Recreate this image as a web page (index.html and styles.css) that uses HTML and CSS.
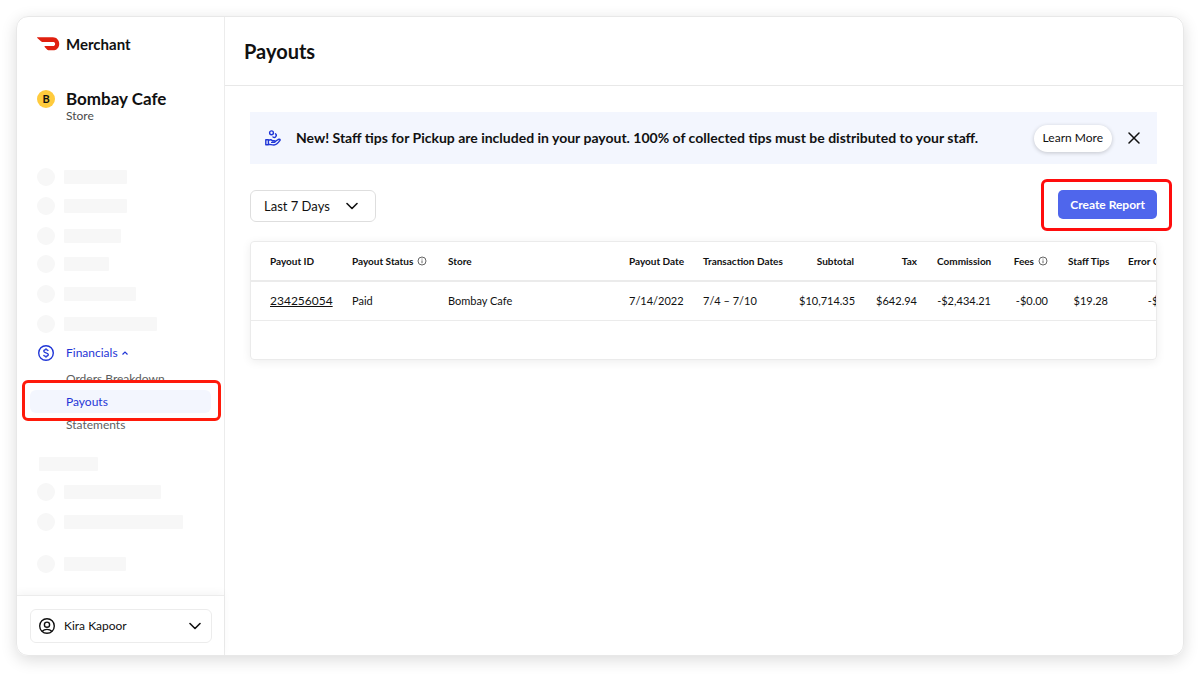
FILE: index.html
```html
<!DOCTYPE html>
<html lang="en">
<head>
<meta charset="utf-8">
<title>Payouts - Merchant</title>
<link rel="stylesheet" href="styles.css">
</head>
<body>
<div class="window">
  <aside class="sidebar">
    <div class="brand">
      <svg class="brand-logo" viewBox="0 0 24 14" aria-hidden="true"><path fill="#e0200f" d="M0.6 0H16.6C20.4 0 23.2 3 23.2 6.9S20.4 13.6 16.6 13.6H11.8C11.3 13.6 11 13.4 10.7 13.1L8 10.2C7.6 9.7 7.8 9.2 8.4 9.2H16.6C18 9.2 18.9 8.2 18.9 6.8S18 4.8 16.6 4.8H5.6C5.1 4.8 4.7 4.6 4.4 4.3L0.3 0.8C-0.1 0.4 0.1 0 0.6 0Z"/></svg>
      <span class="brand-name">Merchant</span>
    </div>
    <div class="store">
      <span class="store-badge">B</span>
      <div>
        <div class="store-name">Bombay Cafe</div>
        <div class="store-type">Store</div>
      </div>
    </div>
    <div class="skeleton-group skeleton-main" aria-hidden="true">
      <div class="skeleton"><i class="dot"></i><i class="bar" style="width:63px"></i></div>
      <div class="skeleton"><i class="dot"></i><i class="bar" style="width:63px"></i></div>
      <div class="skeleton"><i class="dot"></i><i class="bar" style="width:57px"></i></div>
      <div class="skeleton"><i class="dot"></i><i class="bar" style="width:45px"></i></div>
      <div class="skeleton"><i class="dot"></i><i class="bar" style="width:72px"></i></div>
      <div class="skeleton"><i class="dot"></i><i class="bar" style="width:93px"></i></div>
    </div>
    <nav class="nav">
      <button class="nav-parent" type="button" aria-expanded="true">
        <svg class="nav-icon" viewBox="0 0 16 16" fill="none" stroke="currentColor" aria-hidden="true"><circle cx="8" cy="8" r="7.3" stroke-width="1.4"/><path stroke-width="1.3" d="M10.2 6C10 5.1 9.2 4.7 8 4.7S5.8 5.3 5.8 6.3C5.8 8.4 10.3 7.3 10.3 9.6C10.3 10.7 9.3 11.3 8 11.3S5.8 10.8 5.6 9.8M8 3.2V4.8M8 11.2V12.8"/></svg>
        <span>Financials</span>
        <svg class="nav-caret" viewBox="0 0 6 4" fill="none" stroke="currentColor" stroke-width="1.2" aria-hidden="true"><path d="M0.5 3.5L3 1L5.5 3.5"/></svg>
      </button>
      <ul class="subnav">
        <li><a class="subnav-link" href="#">Orders Breakdown</a></li>
        <li class="current"><a class="subnav-link" href="#" aria-current="page">Payouts</a></li>
        <li><a class="subnav-link" href="#">Statements</a></li>
      </ul>
    </nav>
    <div class="skeleton-group skeleton-extra" aria-hidden="true">
      <div class="skeleton skeleton-title"><i class="bar" style="width:59px"></i></div>
      <div class="skeleton"><i class="dot"></i><i class="bar" style="width:97px"></i></div>
      <div class="skeleton"><i class="dot"></i><i class="bar" style="width:119px"></i></div>
      <div class="skeleton"><i class="dot"></i><i class="bar" style="width:62px"></i></div>
    </div>
    <div class="account">
      <button class="account-button" type="button">
        <svg class="account-icon" viewBox="0 0 16 16" fill="none" stroke="currentColor" stroke-width="1.4" aria-hidden="true"><circle cx="8" cy="8" r="7.3"/><circle cx="8" cy="6.7" r="2.6"/><path d="M3.2 13.3C4.6 11.9 6.2 11.4 8 11.4S11.4 11.9 12.8 13.3"/></svg>
        <span>Kira Kapoor</span>
        <svg class="chevron" viewBox="0 0 12 8" aria-hidden="true"><path d="M1 1.5L6 6.5L11 1.5"/></svg>
      </button>
    </div>
  </aside>
  <main class="main">
    <header class="page-header"><h1>Payouts</h1></header>
    <div class="content">
      <section class="banner">
        <svg class="banner-icon" viewBox="0 0 16 16" fill="none" stroke="currentColor" stroke-width="1.4" stroke-linejoin="round" stroke-linecap="round" aria-hidden="true"><circle cx="6.5" cy="2.8" r="1.9"/><path d="M10.4 3.8A2 2 0 0 1 8 7"/><path d="M0.8 9.8H3.4V14.8H0.8ZM3.6 10.3C5.4 9.4 6.6 9.9 7.4 10.7H9.4C10.3 10.7 10.3 12.4 9.4 12.4H6.6M10.3 11.4L13.2 9.5C14.6 8.8 15.6 9.6 14.8 10.7C13.2 12.9 11.6 15 9 15C6.6 15 5.4 14.3 3.6 14.3"/></svg>
        <p class="banner-text">New! Staff tips for Pickup are included in your payout. 100% of collected tips must be distributed to your staff.</p>
        <button class="learn-more" type="button">Learn More</button>
        <button class="close" type="button" aria-label="Dismiss"><svg viewBox="0 0 12 12" fill="none" stroke="currentColor" stroke-width="1.5" stroke-linecap="round" aria-hidden="true"><path d="M1 1L11 11M11 1L1 11"/></svg></button>
      </section>
      <div class="toolbar">
        <div class="range">
          <select class="range-select" aria-label="Date range"><option>Last 7 Days</option></select>
          <svg class="chevron range-chevron" viewBox="0 0 12 8" aria-hidden="true"><path d="M1 1.5L6 6.5L11 1.5"/></svg>
        </div>
        <div class="create">
          <button class="create-report" type="button">Create Report</button>
        </div>
      </div>
      <div class="table-card">
        <table class="payouts">
          <colgroup>
            <col class="col-id"><col class="col-status"><col><col class="col-date"><col class="col-transactions"><col class="col-subtotal"><col class="col-tax"><col class="col-commission"><col class="col-fees"><col class="col-tips"><col class="col-error">
          </colgroup>
          <thead>
            <tr>
              <th>Payout ID</th>
              <th><span class="with-info">Payout Status <svg class="info" viewBox="0 0 10 10" aria-hidden="true"><circle cx="5" cy="5" r="4"/><path d="M5 4.4V7.2M5 2.6V3.5"/></svg></span></th>
              <th>Store</th>
              <th>Payout Date</th>
              <th>Transaction Dates</th>
              <th class="num">Subtotal</th>
              <th class="num">Tax</th>
              <th class="num">Commission</th>
              <th class="num"><span class="with-info">Fees <svg class="info" viewBox="0 0 10 10" aria-hidden="true"><circle cx="5" cy="5" r="4"/><path d="M5 4.4V7.2M5 2.6V3.5"/></svg></span></th>
              <th class="num">Staff Tips</th>
              <th>Error Charges</th>
            </tr>
          </thead>
          <tbody>
            <tr>
              <td><a class="payout-link" href="#">234256054</a></td>
              <td>Paid</td>
              <td>Bombay Cafe</td>
              <td>7/14/2022</td>
              <td>7/4 – 7/10</td>
              <td class="num">$10,714.35</td>
              <td class="num">$642.94</td>
              <td class="num">-$2,434.21</td>
              <td class="num">-$0.00</td>
              <td class="num">$19.28</td>
              <td class="num">-$0.00</td>
            </tr>
          </tbody>
        </table>
      </div>
    </div>
  </main>
</div>
</body>
</html>
```
FILE: styles.css
```css
* { box-sizing: border-box; }
body {
  margin: 0;
  padding: 16px 16px 30px;
  min-height: 100vh;
  display: flex;
  background: #fff;
  color: #111;
  font-family: Lato, "Open Sans", sans-serif;
  font-size: 12px;
  line-height: 16px;
}
button, select { font: inherit; color: inherit; cursor: pointer; }
h1, p, ul { margin: 0; padding: 0; }
a { color: inherit; text-decoration: none; }

.window {
  flex: 1;
  display: flex;
  border: 1px solid #e8e8e8;
  border-radius: 12px;
  box-shadow: 0 4px 16px rgba(0, 0, 0, 0.14);
  overflow: hidden;
}

.sidebar {
  width: 208px;
  flex: none;
  display: flex;
  flex-direction: column;
  border-right: 1px solid #ececec;
}
.brand {
  display: flex;
  align-items: center;
  gap: 6px;
  padding: 17px 20px 0;
}
.brand-logo { width: 23px; height: 14px; }
.brand-name { font-size: 15px; line-height: 20px; font-weight: 700; }

.store {
  display: flex;
  align-items: flex-start;
  gap: 11px;
  padding: 35px 20px 0;
}
.store-badge {
  width: 18px;
  height: 18px;
  margin-top: 1px;
  border-radius: 50%;
  background: #ffcb3d;
  font-size: 11px;
  line-height: 18px;
  font-weight: 700;
  text-align: center;
}
.store-name { font-size: 17px; line-height: 20px; font-weight: 700; }
.store-type { color: #4a4a4a; line-height: 14px; }

.skeleton-group { display: grid; padding-left: 20px; }
.skeleton-main { margin-top: 45px; grid-template-rows: 29px 30px 28px 30px 30px 18px; }
.skeleton-extra { margin-top: 21px; grid-template-rows: 26px 30px 42px 18px; }
.skeleton { display: flex; align-items: center; gap: 9px; height: 18px; }
.skeleton-title { padding-left: 2px; height: 14px; }
.dot { width: 18px; height: 18px; border-radius: 50%; background: #f7f7f7; }
.bar { height: 14px; border-radius: 1px; background: #f7f7f7; }

.nav { margin-top: 11px; }
.nav-parent {
  display: flex;
  align-items: center;
  width: 100%;
  padding: 0 21px;
  border: 0;
  background: none;
  color: #1f35d6;
  line-height: 18px;
}
.nav-icon { width: 16px; height: 16px; margin-right: 12px; }
.nav-caret { width: 6px; height: 4px; margin-left: 4px; }
.subnav { list-style: none; margin-top: 5px; padding: 0 13px; }
.subnav-link {
  display: block;
  padding-left: 36px;
  border-radius: 6px;
  color: #5e5e5e;
  line-height: 23px;
}
.current { position: relative; z-index: 1; }
.current::before {
  content: "";
  position: absolute;
  inset: -10px -10px -8px -8px;
  border: 3px solid #ff1a0a;
  border-radius: 6px;
  background: #fff;
}
.current .subnav-link { position: relative; background: #f3f6fe; color: #1f35d6; }

.account {
  margin-top: auto;
  padding: 13px 12px 12px 13px;
  border-top: 1px solid #ececec;
  box-shadow: 0 -3px 8px rgba(0, 0, 0, 0.04);
}
.account-button {
  display: flex;
  align-items: center;
  gap: 9px;
  width: 100%;
  height: 34px;
  padding: 0 10px 0 8px;
  border: 1px solid #ececec;
  border-radius: 6px;
  background: #fff;
}
.account-icon { width: 16px; height: 16px; }
.chevron {
  width: 12px;
  height: 8px;
  fill: none;
  stroke: #111;
  stroke-width: 1.6;
  stroke-linecap: round;
  stroke-linejoin: round;
}
.account-button .chevron { margin-left: auto; }

.main { flex: 1; min-width: 0; }
.page-header { padding: 21px 19px; border-bottom: 1px solid #e8e8e8; }
.page-header h1 { font-size: 20px; line-height: 26px; font-weight: 700; }
.content { padding: 26px 26px 0 25px; }

.banner {
  display: flex;
  align-items: center;
  min-height: 52px;
  padding: 12px 15px;
  background: #f3f6fe;
}
.banner-icon { width: 16px; height: 16px; margin-right: 15px; color: #1f35d6; flex: none; }
.banner-text { font-size: 14px; line-height: 20px; font-weight: 700; white-space: nowrap; }
.learn-more {
  margin-left: auto;
  height: 27px;
  padding: 0 9px;
  border: 0;
  border-radius: 14px;
  background: #fff;
  box-shadow: 0 1px 4px rgba(0, 0, 0, 0.2);
  white-space: nowrap;
}
.close {
  display: flex;
  margin-left: 14px;
  padding: 2px;
  border: 0;
  background: none;
}
.close svg { width: 12px; height: 12px; }

.toolbar {
  display: flex;
  justify-content: space-between;
  align-items: flex-start;
  margin-top: 26px;
}
.range { display: flex; align-items: center; position: relative; }
.range-select {
  appearance: none;
  width: 126px;
  height: 32px;
  padding: 0 30px 0 13px;
  border: 1px solid #dedede;
  border-radius: 6px;
  background: #fff;
  font-size: 13px;
}
.range-chevron { position: absolute; right: 18px; pointer-events: none; }
.create { position: relative; }
.create::before {
  content: "";
  position: absolute;
  inset: -11px -15px -12px -17px;
  border: 3px solid #ff0d0d;
  border-radius: 6px;
}
.create-report {
  position: relative;
  display: block;
  height: 29px;
  padding: 0 12px;
  border: 0;
  border-radius: 5px;
  background: #4f66ec;
  color: #fff;
  font-weight: 700;
}

.table-card {
  margin-top: 19px;
  padding-bottom: 38px;
  border: 1px solid #ebebeb;
  border-radius: 4px;
  box-shadow: 0 2px 10px rgba(0, 0, 0, 0.07);
  overflow: hidden;
}
.payouts {
  width: calc(100% + 34px);
  table-layout: fixed;
  border-collapse: separate;
  border-spacing: 0;
}
.payouts th, .payouts td {
  padding: 0 10px;
  text-align: left;
  white-space: nowrap;
}
.payouts th { height: 40px; border-bottom: 2px solid #ebebeb; font-size: 10px; font-weight: 700; }
.payouts td { height: 39px; border-bottom: 1px solid #ebebeb; font-size: 11px; }
.payouts th:first-child, .payouts td:first-child { padding-left: 19px; }
.payouts .num { text-align: right; }
.col-id { width: 91px; }
.col-status { width: 96px; }
.col-date { width: 74px; }
.col-transactions { width: 96px; }
.col-subtotal { width: 75px; }
.col-tax { width: 63px; }
.col-commission { width: 74px; }
.col-fees { width: 57px; }
.col-tips { width: 60px; }
.col-error { width: 72px; }
.with-info { display: inline-flex; align-items: center; gap: 4px; }
.info { width: 10px; height: 10px; fill: none; stroke: #666; }
.payout-link { font-size: 12px; text-decoration: underline; }
```
